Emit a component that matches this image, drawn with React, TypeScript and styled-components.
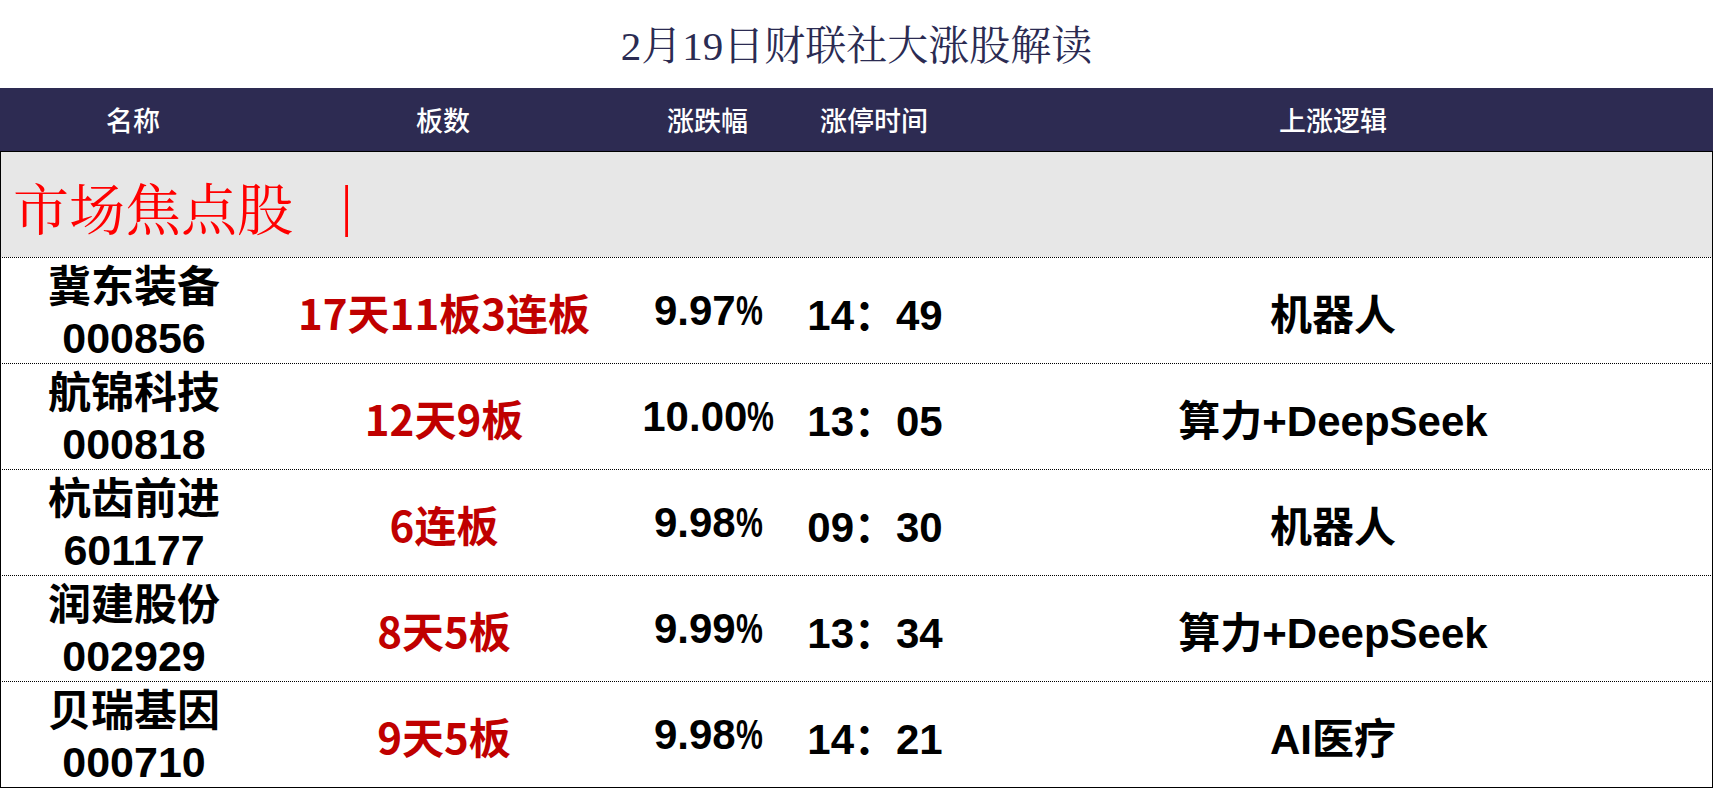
import React from 'react';
import styled, { createGlobalStyle } from 'styled-components';

interface Stock {
  name: string;
  code: string;
  boards: string;
  change: string;
  time: string;
  logic: string;
}

const stocks: Stock[] = [
  { name: '冀东装备', code: '000856', boards: '17天11板3连板', change: '9.97%', time: '14：49', logic: '机器人' },
  { name: '航锦科技', code: '000818', boards: '12天9板', change: '10.00%', time: '13：05', logic: '算力+DeepSeek' },
  { name: '杭齿前进', code: '601177', boards: '6连板', change: '9.98%', time: '09：30', logic: '机器人' },
  { name: '润建股份', code: '002929', boards: '8天5板', change: '9.99%', time: '13：34', logic: '算力+DeepSeek' },
  { name: '贝瑞基因', code: '000710', boards: '9天5板', change: '9.98%', time: '14：21', logic: 'AI医疗' },
];

const columns = ['名称', '板数', '涨跌幅', '涨停时间', '上涨逻辑'];

const App: React.FC = () => {
  return (
    <Page>
      <GlobalStyle />
      <Title>2月19日财联社大涨股解读</Title>
      <HeaderRow>
        {columns.map((col) => (
          <HeaderCell key={col}>{col}</HeaderCell>
        ))}
      </HeaderRow>
      <SectionBand>
        市场焦点股
        <Bar>|</Bar>
      </SectionBand>
      {stocks.map((stock, index) => (
        <Row key={stock.code} last={index === stocks.length - 1}>
          <NameCell>
            <span>{stock.name}</span>
            <span>{stock.code}</span>
          </NameCell>
          <BoardCell>{stock.boards}</BoardCell>
          <Cell>
            {stock.change.replace('%', '')}
            <Percent>%</Percent>
          </Cell>
          <Cell>{stock.time}</Cell>
          <Cell>{stock.logic}</Cell>
        </Row>
      ))}
    </Page>
  );
};

export default App;

const GlobalStyle = createGlobalStyle`
  html, body {
    margin: 0;
    padding: 0;
    background: #ffffff;
  }
`;

const Page = styled.div`
  width: 1713px;
  font-family: 'Liberation Sans', 'Noto Sans CJK SC', sans-serif;
`;

const Title = styled.div`
  height: 88px;
  display: flex;
  align-items: center;
  justify-content: center;
  padding-bottom: 4px;
  box-sizing: border-box;
  font-family: 'Liberation Serif', 'Noto Serif CJK SC', 'Noto Sans CJK SC', serif;
  font-size: 41px;
  color: #2b2b52;
`;

const gridColumns = '266px 354px 175px 158px 1fr';

const HeaderRow = styled.div`
  display: grid;
  grid-template-columns: ${gridColumns};
  height: 63px;
  background: #2d2b52;
  border-bottom: 1px solid #000;
`;

const HeaderCell = styled.div`
  display: flex;
  align-items: center;
  justify-content: center;
  color: #ffffff;
  font-family: 'Noto Sans CJK SC', sans-serif;
  font-size: 27px;
  font-weight: 500;
`;

const SectionBand = styled.div`
  height: 105px;
  display: flex;
  align-items: center;
  padding-left: 12px;
  padding-top: 2px;
  box-sizing: border-box;
  background: #e7e7e7;
  border-left: 1px solid #000;
  border-right: 1px solid #000;
  color: #ff0000;
  font-family: 'Liberation Serif', 'Noto Serif CJK SC', 'Noto Sans CJK SC', serif;
  font-size: 56px;
`;

const Bar = styled.span`
  margin-left: 48px;
  font-size: 56px;
`;

const Row = styled.div<{ last: boolean }>`
  display: grid;
  grid-template-columns: ${gridColumns};
  box-sizing: border-box;
  border-top: 1px dotted #000;
  border-left: 1px solid #000;
  border-right: 1px solid #000;
  border-bottom: ${(props) => (props.last ? '1px solid #000' : 'none')};
  height: ${(props) => (props.last ? '107px' : '106px')};
`;

const Cell = styled.div`
  display: flex;
  align-items: center;
  justify-content: center;
  color: #000;
  font-size: 42px;
  font-weight: 700;
  white-space: nowrap;
`;

const Percent = styled.span`
  display: inline-block;
  transform: scaleX(0.72);
  transform-origin: left center;
  margin-right: -10px;
`;

const NameCell = styled(Cell)`
  flex-direction: column;
  line-height: 51px;
  padding-top: 4px;
  font-size: 43px;
`;

const BoardCell = styled(Cell)`
  color: #c00000;
  font-family: 'Noto Sans CJK SC', sans-serif;
  font-size: 42px;
`;
